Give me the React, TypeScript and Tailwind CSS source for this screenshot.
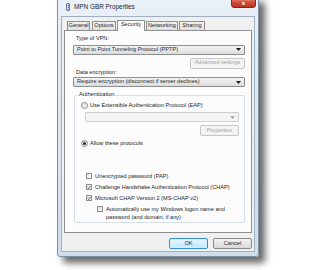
const Combo = ({ text, disabled }: { text?: string; disabled?: boolean }) => (
  <div
    className={`flex h-[10px] items-center justify-between rounded-[1px] border pl-[3px] pr-[3px] ${
      disabled
        ? "border-[#cfcfcf] bg-[#f4f4f4]"
        : "border-[#8e8f8f] bg-gradient-to-b from-[#f4f4f4] to-[#dcdcdc]"
    }`}
  >
    <span className="text-[5.6px] leading-none text-[#1e1e1e]">{text}</span>
    <svg width="5" height="3" viewBox="0 0 5 3">
      <path d="M0 0h5L2.5 3z" fill={disabled ? "#a8a8a8" : "#1a1a1a"} />
    </svg>
  </div>
);

const Btn = ({ label, disabled, primary, w }: { label: string; disabled?: boolean; primary?: boolean; w: string }) => (
  <div
    className={`flex h-[11px] items-center justify-center rounded-[2px] border text-[5.6px] leading-none ${w} ${
      primary
        ? "border-[#3b8fc9] bg-gradient-to-b from-[#eaf6fd] to-[#bee6fd] text-[#1e1e1e] shadow-[inset_0_0_0_1px_#d6f0fc]"
        : disabled
        ? "border-[#c6c6c6] bg-[#f4f4f4] text-[#a2a2a2]"
        : "border-[#8a8a8a] bg-gradient-to-b from-[#f3f3f3] to-[#d9d9d9] text-[#1e1e1e]"
    }`}
  >
    {label}
  </div>
);

const Radio = ({ checked, label }: { checked?: boolean; label: string }) => (
  <div className="flex items-center gap-[2px]">
    <div className="flex h-[7px] w-[7px] items-center justify-center rounded-full border border-[#8a8a8a] bg-gradient-to-br from-[#dcdcdc] to-[#fafafa]">
      {checked && <div className="h-[3px] w-[3px] rounded-full bg-[#2a2a2a]" />}
    </div>
    <span className="text-[5.6px] leading-none text-[#1e1e1e]">{label}</span>
  </div>
);

const Check = ({ checked, label, lines }: { checked?: boolean; label?: string; lines?: string[] }) => (
  <div className="flex items-start gap-[3px]">
    <div className="flex h-[6px] w-[6px] shrink-0 items-center justify-center border border-[#8e8f8f] bg-gradient-to-br from-[#e2e2e2] to-[#fbfbfb]">
      {checked && (
        <svg width="5" height="5" viewBox="0 0 5 5">
          <path d="M0.8 2.6L2 3.9L4.3 0.8" stroke="#2a2a2a" strokeWidth="0.9" fill="none" />
        </svg>
      )}
    </div>
    <div className="flex flex-col gap-[2px] pt-[0.5px] text-[5.6px] leading-none text-[#1e1e1e]">
      {label && <span>{label}</span>}
      {lines?.map((l) => (
        <span key={l}>{l}</span>
      ))}
    </div>
  </div>
);

const tabs = [
  { t: "General", w: "w-[23px]" },
  { t: "Options", w: "w-[24px] ml-[2px]" },
  { t: "Security", w: "w-[28px] ml-[1px]" },
  { t: "Networking", w: "w-[32px] ml-[1px]" },
  { t: "Sharing", w: "w-[26px] ml-[1px]" },
];

export default function App() {
  return (
    <div
      className="h-[270px] w-[330px] overflow-hidden bg-white pl-[57px]"
      style={{ fontFamily: '"Liberation Sans", Arial, sans-serif' }}
    >
      <div className="mt-[-4px] flex h-[261px] w-[202px] flex-col rounded-[3px] border border-[#7e8fa3] bg-gradient-to-b from-[#eaf1f8] via-[#dbe6f1] to-[#cfdcea] px-[3px] pb-[4px] shadow-[6px_6px_7px_rgba(0,0,0,0.6)]">
        {/* title bar */}
        <div className="flex h-[19px] items-center pt-[1px]">
          <div className="ml-[5px] flex h-[8px] w-[4px] flex-col gap-[1px] rounded-[1px] border border-[#6a7a8a] bg-[#cfe0f0] px-[0.5px] pt-[1px]">
            <div className="h-[1px] bg-[#50708f]" />
            <div className="h-[1px] bg-[#50708f]" />
            <div className="h-[1px] bg-[#50708f]" />
          </div>
          <span className="ml-[4px] text-[6.4px] leading-none text-[#1e1e1e]">MPN GBR Properties</span>
          <div className="ml-auto mr-[-1px] mt-[-10px] flex h-[12px] w-[25px] items-end justify-center rounded-b-[3px] border border-[#7a2a22] bg-gradient-to-b from-[#e8a096] via-[#d2503e] to-[#b8321f] pb-[1px]">
            <span className="text-[6px] font-bold leading-none text-white">x</span>
          </div>
        </div>

        {/* client area */}
        <div className="flex flex-1 flex-col border border-[#9fb0c2] bg-[#f0f0f0] px-[2px] pt-[3px]">
          <div className="flex items-end pl-[3px]">
            {tabs.map(({ t, w }) => {
              const sel = t === "Security";
              return (
                <div
                  key={t}
                  className={`flex items-center justify-center border border-b-0 border-[#8e8f8f] text-[5.6px] leading-none text-[#1e1e1e] ${w} ${
                    sel
                      ? "relative z-10 mb-[-1px] h-[11px] bg-[#fcfcfc] pb-[2px]"
                      : "h-[9px] bg-gradient-to-b from-[#f2f2f2] to-[#dfdfdf]"
                  }`}
                >
                  {t}
                </div>
              );
            })}
          </div>

          <div className="flex h-[203px] flex-col border border-[#8e8f8f] bg-[#fcfcfc] pl-[8px] pr-[6px] pt-[5px]">
            <span className="pl-[3px] text-[5.6px] leading-none text-[#1e1e1e]">Type of VPN:</span>
            <div className="mt-[3px]">
              <Combo text="Point to Point Tunneling Protocol (PPTP)" />
            </div>
            <div className="mt-[3px] flex justify-end">
              <Btn label="Advanced settings" disabled w="w-[55px]" />
            </div>
            <span className="mt-[1px] pl-[3px] text-[5.6px] leading-none text-[#1e1e1e]">Data encryption:</span>
            <div className="mt-[2px]">
              <Combo text="Require encryption (disconnect if server declines)" />
            </div>

            <div className="relative ml-[1px] mt-[8px] flex h-[128px] flex-col rounded-[2px] border border-[#d5dfe5] pl-[6px] pr-[5px] pt-[6px]">
              <span className="absolute left-[3px] top-[-4px] bg-[#fcfcfc] px-[1px] text-[5.6px] leading-none text-[#1e1e1e]">
                Authentication
              </span>
              <Radio label="Use Extensible Authentication Protocol (EAP)" />
              <div className="ml-[4px] mt-[3px]">
                <Combo disabled />
              </div>
              <div className="mt-[3px] flex justify-end">
                <Btn label="Properties" disabled w="w-[39px]" />
              </div>
              <div className="mt-[4px]">
                <Radio checked label="Allow these protocols" />
              </div>
              <div className="ml-[5px] mt-[26px] flex flex-col gap-[5px]">
                <Check label="Unencrypted password (PAP)" />
                <Check checked label="Challenge Handshake Authentication Protocol (CHAP)" />
                <Check checked label="Microsoft CHAP Version 2 (MS-CHAP v2)" />
                <div className="ml-[11px]">
                  <Check lines={["Automatically use my Windows logon name and", "password (and domain, if any)"]} />
                </div>
              </div>
            </div>
          </div>

          <div className="mt-[5px] flex justify-end gap-[5px]">
            <Btn label="OK" primary w="w-[39px]" />
            <Btn label="Cancel" w="w-[39px]" />
          </div>
        </div>
      </div>
    </div>
  );
}
